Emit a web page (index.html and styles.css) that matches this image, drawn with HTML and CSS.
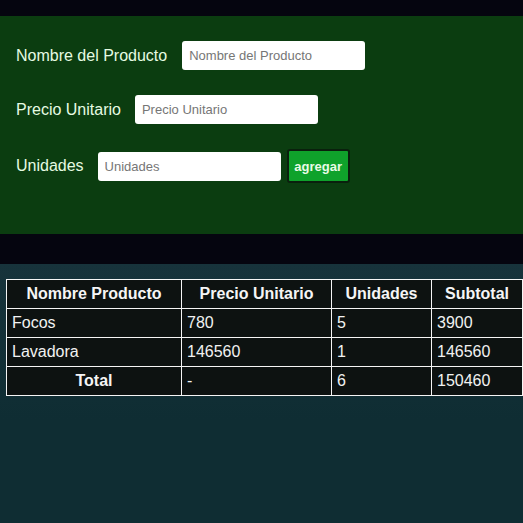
FILE: index.html
```html
<!DOCTYPE html>
<html lang="es">
<head>
<meta charset="utf-8">
<title>Productos</title>
<link rel="stylesheet" href="styles.css">
</head>
<body>
<div class="top-band"></div>
<section class="form-panel">
  <div class="row">
    <label class="label label-nombre" for="nombre">Nombre del Producto</label>
    <input class="field" id="nombre" type="text" placeholder="Nombre del Producto">
  </div>
  <div class="row">
    <label class="label label-precio" for="precio">Precio Unitario</label>
    <input class="field" id="precio" type="text" placeholder="Precio Unitario">
  </div>
  <div class="row">
    <label class="label label-unidades" for="unidades">Unidades</label>
    <input class="field" id="unidades" type="text" placeholder="Unidades">
    <button class="btn" type="button">agregar</button>
  </div>
</section>
<div class="mid-band"></div>
<section class="table-panel">
  <table class="grid">
    <colgroup>
      <col class="c1"><col class="c2"><col class="c3"><col class="c4">
    </colgroup>
    <thead>
      <tr><th>Nombre Producto</th><th>Precio Unitario</th><th>Unidades</th><th>Subtotal</th></tr>
    </thead>
    <tbody>
      <tr><td>Focos</td><td>780</td><td>5</td><td>3900</td></tr>
      <tr><td>Lavadora</td><td>146560</td><td>1</td><td>146560</td></tr>
      <tr><th>Total</th><td>-</td><td>6</td><td>150460</td></tr>
    </tbody>
  </table>
</section>
</body>
</html>
```
FILE: styles.css
```css
html, body {
  margin: 0;
  padding: 0;
  height: 100%;
}
body {
  background: #05050f;
  font-family: "Liberation Sans", Arial, sans-serif;
  display: flex;
  flex-direction: column;
}
.top-band { height: 16px; flex: none; }
.form-panel {
  background: #0b3d10;
  padding: 25px 16px 51px;
  display: flex;
  flex-direction: column;
  gap: 25px;
  flex: none;
}
.row {
  display: flex;
  align-items: center;
  min-height: 29px;
}
.label {
  color: #e6fbe2;
  font-size: 16px;
}
.label-nombre { margin-right: 15px; }
.label-precio { margin-right: 14px; }
.label-unidades { margin-right: 14px; }
.field {
  width: 183px;
  height: 29px;
  box-sizing: border-box;
  border: none;
  border-radius: 3px;
  background: #ffffff;
  padding: 0 7px;
  font-family: "Liberation Sans", Arial, sans-serif;
  font-size: 13px;
  color: #222;
  outline: none;
}
.field::placeholder { color: #767676; }
.btn {
  margin-left: 6px;
  width: 63px;
  height: 34px;
  box-sizing: border-box;
  background: #0fa22b;
  border: 2px solid #0a200d;
  border-radius: 3px;
  color: #e9fbe6;
  font-family: "Liberation Sans", Arial, sans-serif;
  font-size: 13px;
  font-weight: bold;
  padding: 0;
}
.mid-band { height: 30px; flex: none; }
.table-panel {
  flex: 1;
  background: linear-gradient(#17333b, #0f2d33 60%);
  padding: 15px 0 0 6px;
}
.grid {
  border-collapse: collapse;
  width: 516px;
  background: #0d1211;
  color: #f2f2f2;
  font-size: 16px;
  table-layout: fixed;
}
.c1 { width: 175px; }
.c2 { width: 150px; }
.c3 { width: 100px; }
.c4 { width: 91px; }
.grid th, .grid td {
  border: 1px solid #f5f5f5;
  padding: 5px 5px;
  line-height: 18px;
}
.grid th { text-align: center; font-weight: bold; color: #f5f5f5; }
.grid td { text-align: left; }
```
